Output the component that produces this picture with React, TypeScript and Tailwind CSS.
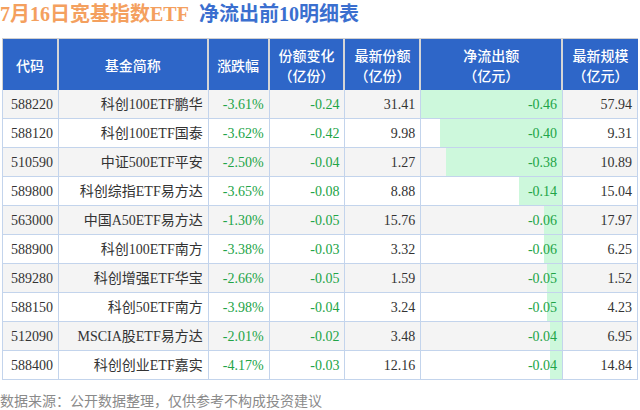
import React from "react";

interface Row {
  code: string;
  name: string;
  pct: string;
  chg: string;
  shares: string;
  outflow: number;
  scale: string;
}

const rows: Row[] = [
  { code: "588220", name: "科创100ETF鹏华", pct: "-3.61%", chg: "-0.24", shares: "31.41", outflow: -0.46, scale: "57.94" },
  { code: "588120", name: "科创100ETF国泰", pct: "-3.62%", chg: "-0.42", shares: "9.98", outflow: -0.4, scale: "9.31" },
  { code: "510590", name: "中证500ETF平安", pct: "-2.50%", chg: "-0.04", shares: "1.27", outflow: -0.38, scale: "10.89" },
  { code: "589800", name: "科创综指ETF易方达", pct: "-3.65%", chg: "-0.08", shares: "8.88", outflow: -0.14, scale: "15.04" },
  { code: "563000", name: "中国A50ETF易方达", pct: "-1.30%", chg: "-0.05", shares: "15.76", outflow: -0.06, scale: "17.97" },
  { code: "588900", name: "科创100ETF南方", pct: "-3.38%", chg: "-0.03", shares: "3.32", outflow: -0.06, scale: "6.25" },
  { code: "589280", name: "科创增强ETF华宝", pct: "-2.66%", chg: "-0.05", shares: "1.59", outflow: -0.05, scale: "1.52" },
  { code: "588150", name: "科创50ETF南方", pct: "-3.98%", chg: "-0.04", shares: "3.24", outflow: -0.05, scale: "4.23" },
  { code: "512090", name: "MSCIA股ETF易方达", pct: "-2.01%", chg: "-0.02", shares: "3.48", outflow: -0.04, scale: "6.95" },
  { code: "588400", name: "科创创业ETF嘉实", pct: "-4.17%", chg: "-0.03", shares: "12.16", outflow: -0.04, scale: "14.84" },
];

const maxOut = 0.46;

const cell = "h-full flex items-center justify-end pr-[5px] border-r border-[#c3d4ec]";
const head = "h-full flex flex-col items-center justify-center border-r-2 border-[#d6d6d6] leading-[20px]";

export default function App() {
  return (
    <div className="relative w-[640px] h-[410px] bg-white overflow-hidden font-['Liberation_Serif','Noto_Sans_CJK_SC',serif]">
      {/* title */}
      <div className="h-[38px] pt-[2px] flex items-start gap-[10px] text-[20px] font-bold leading-[24px]">
        <span className="text-[#f4a05e]">7月16日宽基指数ETF</span>
        <span className="text-[#3b6fcf]">净流出前10明细表</span>
      </div>

      <div className="ml-[2px] w-[636px] border-l border-t border-[#d0d0d0]">
        {/* header */}
        <div className="flex h-[51px] bg-[#2e66c8] text-white text-[14px] font-['Noto_Sans_CJK_SC',sans-serif] font-medium">
          <div className={`${head} w-[56px]`}>代码</div>
          <div className={`${head} w-[150px]`}>基金简称</div>
          <div className={`${head} w-[61px]`}>涨跌幅</div>
          <div className={`${head} w-[76px]`}>
            <span>份额变化</span>
            <span>（亿份）</span>
          </div>
          <div className={`${head} w-[76px]`}>
            <span>最新份额</span>
            <span>（亿份）</span>
          </div>
          <div className={`${head} w-[142px]`}>
            <span>净流出额</span>
            <span>（亿元）</span>
          </div>
          <div className="h-full w-[75px] flex flex-col items-center justify-center leading-[20px]">
            <span>最新规模</span>
            <span>（亿元）</span>
          </div>
        </div>

        {/* body */}
        <div className="border-l border-[#c3d4ec] -ml-px">
          {rows.map((r, i) => (
            <div
              key={r.code}
              className={`flex h-[29px] border-b border-[#c3d4ec] text-[14px] text-[#333] ${i % 2 === 0 ? "bg-[#f4f4f4]" : "bg-white"}`}
            >
              <div className={`${cell} w-[56px]`}>{r.code}</div>
              <div className={`${cell} w-[150px]`}>{r.name}</div>
              <div className={`${cell} w-[61px] text-[#22a447]`}>{r.pct}</div>
              <div className={`${cell} w-[76px] text-[#22a447]`}>{r.chg}</div>
              <div className={`${cell} w-[76px]`}>{r.shares}</div>
              <div className={`${cell} relative w-[142px] text-[#22a447]`}>
                <div
                  className="absolute right-0 top-0 bottom-0 bg-[#cdf8dc]"
                  style={{ width: `${(Math.abs(r.outflow) / maxOut) * 100}%` }}
                />
                <span className="relative">{r.outflow.toFixed(2)}</span>
              </div>
              <div className={`${cell} w-[75px]`}>{r.scale}</div>
            </div>
          ))}
        </div>
      </div>

      <div className="pt-[11px] text-[14px] leading-[18px] text-[#8a8a8a] font-['Noto_Sans_CJK_SC',sans-serif]">
        数据来源：公开数据整理，仅供参考不构成投资建议
      </div>
    </div>
  );
}
